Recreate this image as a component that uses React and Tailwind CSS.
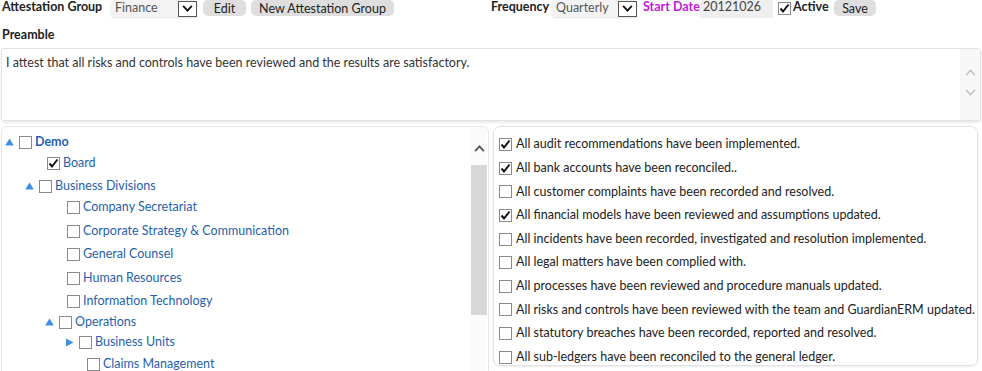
import { useState } from "react";

const tree = [
  { label: "Demo", level: 0, toggle: "up", bold: true, checked: false, gap: "mt-0" },
  { label: "Board", level: 1, toggle: null, checked: true, gap: "mt-[1px]" },
  { label: "Business Divisions", level: 1, toggle: "up", checked: false, gap: "mt-[3px]" },
  { label: "Company Secretariat", level: 2, toggle: null, checked: false, gap: "mt-[1px]" },
  { label: "Corporate Strategy & Communication", level: 2, toggle: null, checked: false, gap: "mt-[4px]" },
  { label: "General Counsel", level: 2, toggle: null, checked: false, gap: "mt-[3px]" },
  { label: "Human Resources", level: 2, toggle: null, checked: false, gap: "mt-[4px]" },
  { label: "Information Technology", level: 2, toggle: null, checked: false, gap: "mt-[3px]" },
  { label: "Operations", level: 2, toggle: "up", checked: false, gap: "mt-[1px]" },
  { label: "Business Units", level: 3, toggle: "right", checked: false, gap: "mt-0" },
  { label: "Claims Management", level: 3, toggle: null, checked: false, gap: "mt-[2px]" },
];

const items = [
  ["All audit recommendations have been implemented.", true],
  ["All bank accounts have been reconciled..", true],
  ["All customer complaints have been recorded and resolved.", false],
  ["All financial models have been reviewed and assumptions updated.", true],
  ["All incidents have been recorded, investigated and resolution implemented.", false],
  ["All legal matters have been complied with.", false],
  ["All processes have been reviewed and procedure manuals updated.", false],
  ["All risks and controls have been reviewed with the team and GuardianERM updated.", false],
  ["All statutory breaches have been recorded, reported and resolved.", false],
  ["All sub-ledgers have been reconciled to the general ledger.", false],
];

function Box({ checked }) {
  return (
    <span className="relative inline-block w-[13px] h-[13px] border border-[#8a8a8a] bg-white shrink-0 align-middle">
      {checked && (
        <svg viewBox="0 0 13 13" className="absolute -left-px -top-px w-[13px] h-[13px]">
          <path d="M2.5 6.5 L5 9.5 L10.5 2.5" fill="none" stroke="#111" strokeWidth="2" />
        </svg>
      )}
    </span>
  );
}

function Tri({ dir }) {
  if (dir === "right")
    return (
      <svg viewBox="0 0 9 9" className="w-[9px] h-[9px] shrink-0">
        <path d="M1 0.5 L8.5 4.5 L1 8.5 Z" fill="#3d8fe6" />
      </svg>
    );
  return (
    <svg viewBox="0 0 9 8" className="w-[9px] h-[8px] shrink-0">
      <path d="M4.5 0.5 L8.8 7.5 L0.2 7.5 Z" fill="#3d8fe6" />
    </svg>
  );
}

function Select({ value, w }) {
  return (
    <div className={`flex items-center h-[17px] bg-[#f3f3f3] shadow-[0_1px_2px_rgba(0,0,0,0.12)] rounded-sm pl-1 ${w}`}>
      <span className="flex-1 text-[#555]">{value}</span>
      <span className="flex items-center justify-center w-[19px] h-[16px] border border-[#555] bg-white">
        <svg viewBox="0 0 12 8" className="w-[11px] h-[7px]">
          <path d="M1 1 L6 6.5 L11 1" fill="none" stroke="#111" strokeWidth="2" />
        </svg>
      </span>
    </div>
  );
}

function Btn({ children, w }) {
  return (
    <button className={`h-[16px] leading-[15px] rounded-[5px] bg-[#dedede] text-[#222] px-2 ${w}`}>{children}</button>
  );
}

export default function App() {
  const [checks, setChecks] = useState(items.map((i) => i[1]));

  return (
    <div className="w-[982px] h-[371px] overflow-hidden bg-white text-[12.5px] text-[#222] font-['Lato','Open_Sans',sans-serif]">
      {/* header row */}
      <div className="flex items-start h-[17px]">
        <span className="font-bold pl-[2px] w-[111px] leading-[14px]">Attestation Group</span>
        <Select value="Finance" w="w-[86px]" />
        <Btn w="ml-[6px] w-[43px]">Edit</Btn>
        <Btn w="ml-[5px] w-[143px]">New Attestation Group</Btn>
        <span className="font-bold ml-[97px] w-[61px] leading-[14px]">Frequency</span>
        <Select value="Quarterly" w="w-[85px]" />
        <span className="font-bold text-[#c21ad8] ml-[6px] w-[57px] leading-[14px]">Start Date</span>
        <span className="h-[18px] w-[73px] bg-[#eeeeee] pl-[3px] leading-[14px] text-[#444]">20121026</span>
        <span className="ml-[5px] mt-[-1px]"><Box checked /></span>
        <span className="font-bold ml-[2px] w-[40px] leading-[14px]">Active</span>
        <Btn w="w-[42px] ml-[1px]">Save</Btn>
      </div>

      <div className="font-bold pl-[2px] mt-[10px] leading-[16px]">Preamble</div>

      {/* preamble textarea */}
      <div className="mx-[1px] mt-[5px] h-[73px] border border-[#e2e2e2] rounded-[3px] shadow-[0_2px_2px_rgba(0,0,0,0.08)] flex">
        <div className="flex-1 pl-[4px] pt-[5px] text-[#333]">
          I attest that all risks and controls have been reviewed and the results are satisfactory.
        </div>
        <div className="w-[20px] bg-[#f7f7f7] flex flex-col items-center pt-[20px] gap-[13px]">
          <svg viewBox="0 0 12 8" className="w-[11px] h-[7px]">
            <path d="M1 7 L6 1.5 L11 7" fill="none" stroke="#bbb" strokeWidth="1.6" />
          </svg>
          <svg viewBox="0 0 12 8" className="w-[11px] h-[7px]">
            <path d="M1 1 L6 6.5 L11 1" fill="none" stroke="#bbb" strokeWidth="1.6" />
          </svg>
        </div>
      </div>

      {/* lower panels */}
      <div className="flex gap-[4px] mt-[5px] px-[1px]">
        <div className="w-[488px] h-[260px] border border-[#e6e6e6] rounded-[6px] flex overflow-hidden">
          <div className="flex-1 pt-[5px]">
            {tree.map((n) => (
              <div
                key={n.label}
                className={`flex items-center h-[20px] ${n.gap}`}
                style={{ paddingLeft: 3 + n.level * 20 }}
              >
                {n.toggle ? <Tri dir={n.toggle} /> : null}
                <span className={`flex ${n.toggle ? "ml-[5px]" : "ml-[22px]"}`}>
                  <Box checked={n.checked} />
                </span>
                <span className={`ml-[3px] text-[#1f5fae] ${n.bold ? "font-bold" : ""}`}>{n.label}</span>
              </div>
            ))}
          </div>
          <div className="w-[16px] bg-[#fbfbfb] flex flex-col items-center mr-[1px]">
            <svg viewBox="0 0 12 8" className="w-[11px] h-[7px] mt-[18px]">
              <path d="M1 7 L6 1.5 L11 7" fill="none" stroke="#555" strokeWidth="2" />
            </svg>
            <div className="w-full h-[150px] bg-[#d7d7d7] mt-[13px]" />
          </div>
        </div>

        <div className="w-[485px] h-[240px] border border-[#e2e2e2] rounded-[7px] shadow-[0_1px_2px_rgba(0,0,0,0.08)] pl-[5px] pt-[6px]">
          {items.map(([label], i) => (
            <label key={label} className="flex items-center h-[23.6px] cursor-pointer">
              <span className="flex" onClick={() => setChecks((c) => c.map((v, j) => (j === i ? !v : v)))}>
                <Box checked={checks[i]} />
              </span>
              <span className="ml-[4px] text-[#222]">{label}</span>
            </label>
          ))}
        </div>
      </div>
    </div>
  );
}
